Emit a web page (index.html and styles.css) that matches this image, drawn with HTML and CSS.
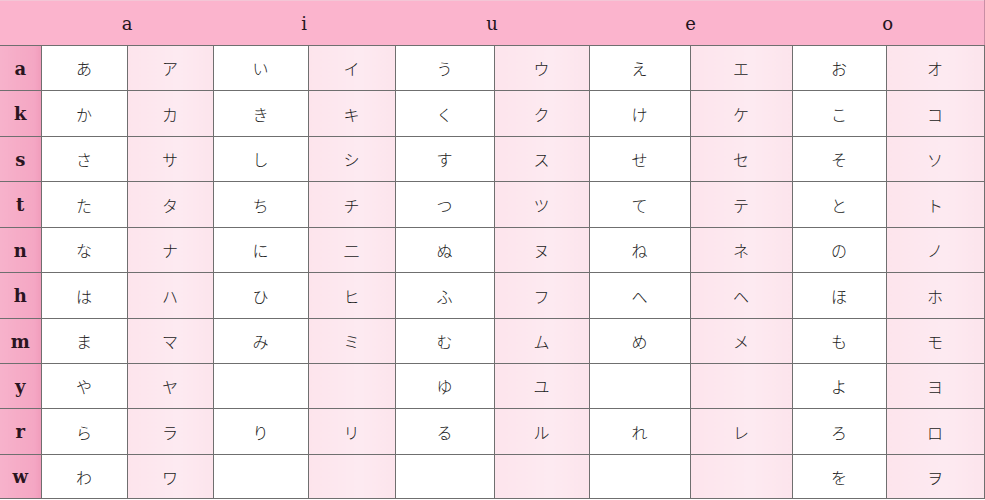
FILE: index.html
```html
<!DOCTYPE html>
<html lang="ja">
<head>
<meta charset="utf-8">
<link rel="stylesheet" href="styles.css">
</head>
<body>
<table class="kana">
  <colgroup>
    <col class="c0"><col class="c1"><col class="c2"><col class="c3"><col class="c4"><col class="c5"><col class="c6"><col class="c7"><col class="c8"><col class="c9"><col class="c10">
  </colgroup>
  <thead>
    <tr class="head">
      <th class="corner"></th>
      <th colspan="2">a</th>
      <th colspan="2">i</th>
      <th colspan="2">u</th>
      <th colspan="2">e</th>
      <th colspan="2">o</th>
    </tr>
  </thead>
  <tbody>
    <tr class="r45"><th class="lab">a</th><td>あ</td><td class="kata">ア</td><td>い</td><td class="kata">イ</td><td>う</td><td class="kata">ウ</td><td>え</td><td class="kata">エ</td><td>お</td><td class="kata">オ</td></tr>
    <tr class="r46"><th class="lab">k</th><td>か</td><td class="kata">カ</td><td>き</td><td class="kata">キ</td><td>く</td><td class="kata">ク</td><td>け</td><td class="kata">ケ</td><td>こ</td><td class="kata">コ</td></tr>
    <tr class="r45"><th class="lab">s</th><td>さ</td><td class="kata">サ</td><td>し</td><td class="kata">シ</td><td>す</td><td class="kata">ス</td><td>せ</td><td class="kata">セ</td><td>そ</td><td class="kata">ソ</td></tr>
    <tr class="r46"><th class="lab">t</th><td>た</td><td class="kata">タ</td><td>ち</td><td class="kata">チ</td><td>つ</td><td class="kata">ツ</td><td>て</td><td class="kata">テ</td><td>と</td><td class="kata">ト</td></tr>
    <tr class="r45"><th class="lab">n</th><td>な</td><td class="kata">ナ</td><td>に</td><td class="kata">二</td><td>ぬ</td><td class="kata">ヌ</td><td>ね</td><td class="kata">ネ</td><td>の</td><td class="kata">ノ</td></tr>
    <tr class="r46"><th class="lab">h</th><td>は</td><td class="kata">ハ</td><td>ひ</td><td class="kata">ヒ</td><td>ふ</td><td class="kata">フ</td><td>へ</td><td class="kata">ヘ</td><td>ほ</td><td class="kata">ホ</td></tr>
    <tr class="r45"><th class="lab">m</th><td>ま</td><td class="kata">マ</td><td>み</td><td class="kata">ミ</td><td>む</td><td class="kata">ム</td><td>め</td><td class="kata">メ</td><td>も</td><td class="kata">モ</td></tr>
    <tr class="r45"><th class="lab">y</th><td>や</td><td class="kata">ヤ</td><td></td><td class="kata"></td><td>ゆ</td><td class="kata">ユ</td><td></td><td class="kata"></td><td>よ</td><td class="kata">ヨ</td></tr>
    <tr class="r46"><th class="lab">r</th><td>ら</td><td class="kata">ラ</td><td>り</td><td class="kata">リ</td><td>る</td><td class="kata">ル</td><td>れ</td><td class="kata">レ</td><td>ろ</td><td class="kata">ロ</td></tr>
    <tr class="r44"><th class="lab">w</th><td>わ</td><td class="kata">ワ</td><td></td><td class="kata"></td><td></td><td class="kata"></td><td></td><td class="kata"></td><td>を</td><td class="kata">ヲ</td></tr>
  </tbody>
</table>
</body>
</html>
```
FILE: styles.css
```css
html, body {
  margin: 0;
  padding: 0;
  background: #ffffff;
}

.kana {
  border-collapse: collapse;
  table-layout: fixed;
  width: 984px;
  font-family: "Noto Sans CJK JP", sans-serif;
}

.c0 { width: 41px; }
.c1 { width: 86px; }
.c2 { width: 86px; }
.c3 { width: 95px; }
.c4 { width: 87px; }
.c5 { width: 99px; }
.c6 { width: 95px; }
.c7 { width: 101px; }
.c8 { width: 102px; }
.c9 { width: 94px; }
.c10 { width: 98px; }

.head th {
  height: 44px;
  padding: 0;
  background: #fbb4cd;
  border-top: 1px solid #f3c6d6;
  border-bottom: 1px solid #6f6f6f;
  font-family: "DejaVu Serif", serif;
  font-weight: normal;
  font-size: 18px;
  color: #24141c;
  text-align: center;
  vertical-align: middle;
}

.head th:last-child {
  border-right: 1px solid #c98ea5;
}

.r44 { height: 44px; }
.r45 { height: 45px; }
.r46 { height: 46px; }

td, .lab {
  padding: 0;
  border: 1px solid #6f6f6f;
  text-align: center;
  vertical-align: middle;
}

td {
  font-size: 16px;
  font-weight: 300;
  color: #222222;
  background: #ffffff;
}

td.kata {
  background: linear-gradient(90deg, #fde4ec 0%, #fdeaf1 60%, #fce4ec 100%);
}

.lab {
  border-left: none;
  background: linear-gradient(90deg, #f7b2cb 0%, #f4a6c3 85%, #f09cbb 100%);
  font-family: "DejaVu Serif", serif;
  font-weight: bold;
  font-size: 18px;
  color: #2a1420;
}
```
